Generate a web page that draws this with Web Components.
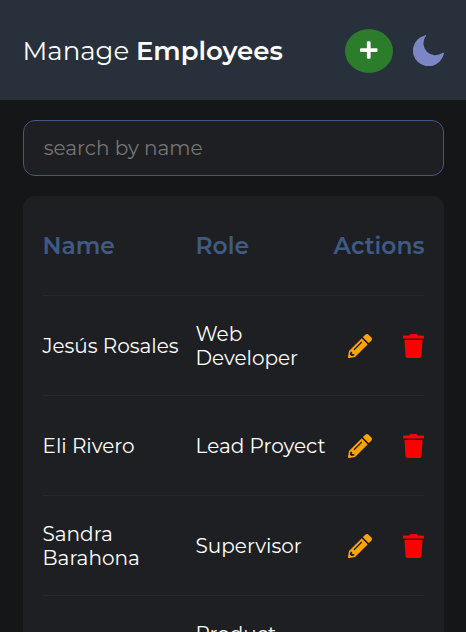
<!DOCTYPE html>
<html lang="en">
<head>
<meta charset="utf-8">
<title>Manage Employees</title>
<style>
  html, body { margin: 0; height: 100%; overflow: hidden; background: #151618; }
  body { font-family: Montserrat, Inter, "Open Sans", sans-serif; color: #fff; }
</style>
</head>
<body>
<employee-app></employee-app>
<script>
const define = (name, html, setup) => {
  const template = document.createElement('template');
  template.innerHTML = html;
  customElements.define(name, class extends HTMLElement {
    constructor() {
      super();
      this.attachShadow({ mode: 'open' }).append(template.content.cloneNode(true));
    }
    connectedCallback() { if (setup) setup(this); }
  });
};

const icons = {
  plus: ['0 0 448 512', 'M416 208H272V64c0-17.67-14.33-32-32-32h-32c-17.67 0-32 14.33-32 32v144H32c-17.67 0-32 14.33-32 32v32c0 17.67 14.33 32 32 32h144v144c0 17.67 14.33 32 32 32h32c17.67 0 32-14.33 32-32V304h144c17.67 0 32-14.33 32-32v-32c0-17.67-14.33-32-32-32z'],
  moon: ['0 0 94 94', 'M34 2Q41-2 39 3A36.4 36.4 0 0 0 90 54Q96 52 93 59A47.3 47.3 0 1 1 34 2Z'],
  pencil: ['0 0 512 512', 'M497.9 142.1l-46.1 46.1c-4.7 4.7-12.3 4.7-17 0l-111-111c-4.7-4.7-4.7-12.3 0-17l46.1-46.1c18.7-18.7 49.1-18.7 67.9 0l60.1 60.1c18.8 18.7 18.8 49.1 0 67.9zM284.2 99.8L21.6 362.4.4 483.9c-2.9 16.4 11.4 30.6 27.8 27.8l121.5-21.3 262.6-262.6c4.7-4.7 4.7-12.3 0-17l-111-111c-4.8-4.7-12.4-4.7-17.1 0zM124.1 339.9c-5.5-5.5-5.5-14.3 0-19.8l154-154c5.5-5.5 14.3-5.5 19.8 0s5.5 14.3 0 19.8l-154 154c-5.5 5.5-14.3 5.5-19.8 0zM88 424h48v36.3l-64.5 11.3-31.1-31.1L51.7 376H88v48z'],
  trash: ['0 0 448 512', 'M432 32H312l-9.4-18.7A24 24 0 0 0 281.1 0H166.8a23.72 23.72 0 0 0-21.4 13.3L136 32H16A16 16 0 0 0 0 48v32a16 16 0 0 0 16 16h416a16 16 0 0 0 16-16V48a16 16 0 0 0-16-16zM53.2 467a48 48 0 0 0 47.9 45h245.8a48 48 0 0 0 47.9-45L416 128H32z']
};
define('ui-icon', `
  <style>:host { display: block; } svg { display: block; width: 100%; height: 100%; fill: currentColor; }</style>
  <svg><path/></svg>`, el => {
  const [box, d] = icons[el.getAttribute('name')];
  el.shadowRoot.querySelector('svg').setAttribute('viewBox', box);
  el.shadowRoot.querySelector('path').setAttribute('d', d);
});

define('app-header', `
  <style>
    :host { display: flex; align-items: center; box-sizing: border-box; height: 100px; padding: 0 22px 0 22.5px; background: #27303b; }
    h1 { flex: 1; margin: 2px 0 0; font-size: 26px; line-height: 32px; font-weight: 400; white-space: nowrap; }
    b { font-weight: 600; }
    button { display: grid; place-items: center; width: 48px; height: 44px; margin: 1px 20px 0 0; padding: 0; border: 0; border-radius: 50%; background: #2b7d2b; color: #fff; }
    .plus { width: 17.5px; height: 20px; margin-top: -1px; }
    .moon { width: 31px; height: 31px; color: #7c86c4; margin-top: 1px; }
  </style>
  <h1>Manage <b>Employees</b></h1>
  <button aria-label="Add employee"><ui-icon class="plus" name="plus"></ui-icon></button>
  <ui-icon class="moon" name="moon"></ui-icon>`);

define('search-box', `
  <style>
    :host { display: block; box-sizing: border-box; height: 56px; padding: 15px 19.7px; border: 1px solid #3f5b80; border-radius: 12px; background: #1e1f23; color: #757575; font-size: 20px; line-height: 24px; }
  </style>
  <slot></slot>`);

define('employee-row', `
  <style>
    :host { display: grid; grid-template-columns: 153px 138px 1fr; align-items: center; box-sizing: border-box; height: 100px; border-bottom: 1px solid #232a34; font-size: 20px; line-height: 24px; }
    :host([head]) { color: #3f5b84; font-size: 23.4px; line-height: 29px; font-weight: 600; }
  </style>
  <slot name="name"></slot><slot name="role"></slot><slot name="actions"></slot>`);

define('row-actions', `
  <style>
    :host { display: flex; justify-content: flex-end; gap: 31.5px; }
    .pencil { width: 24px; height: 24px; color: #ffa500; }
    .trash { width: 21px; height: 24px; color: #f00; }
  </style>
  <ui-icon class="pencil" name="pencil"></ui-icon><ui-icon class="trash" name="trash"></ui-icon>`);

define('employee-table', `
  <style>:host { display: block; box-sizing: border-box; padding: 0 20px 0 19.5px; border-radius: 12px; background: #1e1f23; }</style>
  <slot></slot>`);

define('employee-app', `
  <style>
    :host { display: block; height: 632px; overflow: hidden; }
    main { display: flex; flex-direction: column; gap: 20px; padding: 20px 22px 0 23px; }
  </style>
  <app-header></app-header>
  <main>
    <search-box>search by name</search-box>
    <employee-table>
      <employee-row head>
        <div slot="name">Name</div>
        <div slot="role">Role</div>
        <div slot="actions">Actions</div>
      </employee-row>
      <employee-row>
        <div slot="name">Jesús Rosales</div>
        <div slot="role">Web<br>Developer</div>
        <row-actions slot="actions"></row-actions>
      </employee-row>
      <employee-row>
        <div slot="name">Eli Rivero</div>
        <div slot="role">Lead Proyect</div>
        <row-actions slot="actions"></row-actions>
      </employee-row>
      <employee-row>
        <div slot="name">Sandra<br>Barahona</div>
        <div slot="role">Supervisor</div>
        <row-actions slot="actions"></row-actions>
      </employee-row>
      <employee-row>
        <div slot="role" style="grid-column: 2; height: 48px">Product</div>
        <row-actions slot="actions"></row-actions>
      </employee-row>
    </employee-table>
  </main>`);
</script>
</body>
</html>
